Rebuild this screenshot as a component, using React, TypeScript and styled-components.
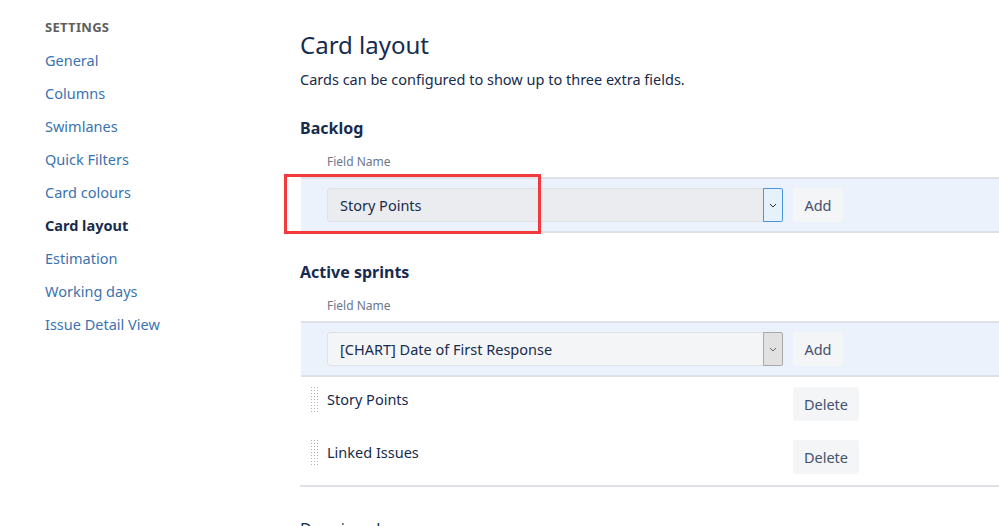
import React from "react";
import styled, { createGlobalStyle } from "styled-components";

const Global = createGlobalStyle`
  html, body { margin: 0; padding: 0; background: #fff; overflow: hidden; }
  body { font-family: "Noto Sans", "Open Sans", sans-serif; color: #172b4d; }
  * { box-sizing: border-box; }
`;

const Page = styled.div`
  display: flex;
  width: 999px;
  height: 526px;
  overflow: hidden;
`;

const Sidebar = styled.nav`
  width: 300px;
  flex: none;
  padding: 17px 0 0 45px;
  display: flex;
  flex-direction: column;
`;

const SideHeading = styled.div`
  font-size: 13px;
  font-weight: 700;
  line-height: 20px;
  color: #5e5e5e;
  letter-spacing: 0.3px;
  margin-bottom: 7px;
`;

const SideItem = styled.a<{ $active?: boolean }>`
  display: block;
  font-size: 14.5px;
  line-height: 33px;
  height: 33px;
  text-decoration: none;
  color: ${(p) => (p.$active ? "#172b4d" : "#3b73af")};
  font-weight: ${(p) => (p.$active ? 700 : 400)};
  cursor: pointer;
`;

const Main = styled.main`
  flex: 1;
  min-width: 0;
  padding-top: 30px;
`;

const Title = styled.h1`
  margin: 0 0 9px;
  font-size: 24px;
  line-height: 30px;
  font-weight: 400;
  color: #172b4d;
`;

const Intro = styled.p`
  margin: 0 0 27px;
  font-size: 14.5px;
  line-height: 20px;
`;

const SectionTitle = styled.h2<{ $light?: boolean }>`
  margin: 0 0 14px;
  font-size: 16px;
  line-height: 24px;
  font-weight: ${(p) => (p.$light ? 400 : 700)};
`;

const FieldLabel = styled.div`
  padding-left: 27px;
  font-size: 12px;
  line-height: 16px;
  color: #6b778c;
  margin-bottom: 7px;
`;

const AddRow = styled.div`
  position: relative;
  display: flex;
  align-items: center;
  gap: 10px;
  height: 56px;
  margin-left: 1px;
  padding: 0 0 0 26px;
  background: #ebf2fc;
  border-top: 2px solid #dfe1e6;
  border-bottom: 2px solid #dfe1e6;
`;

const SelectBox = styled.div<{ $focused?: boolean }>`
  display: flex;
  align-items: stretch;
  width: 456px;
  height: 34px;
  border: 1px solid #dfe1e6;
  border-radius: 3px;
  background: ${(p) => (p.$focused ? "#ebecf0" : "#f4f5f7")};
  font-size: 14.5px;
  color: #172b4d;
`;

const SelectText = styled.span`
  flex: 1;
  display: flex;
  align-items: center;
  padding-left: 12px;
`;

const Arrow = styled.span<{ $focused?: boolean }>`
  width: 20px;
  display: flex;
  align-items: center;
  justify-content: center;
  border: 1px solid ${(p) => (p.$focused ? "#4a95e0" : "#a9a9a9")};
  background: ${(p) => (p.$focused ? "#e5f1fb" : "#e1e1e1")};
  border-radius: 0 2px 2px 0;
  margin: -1px -1px -1px 0;
`;

const Button = styled.button<{ $w: number }>`
  width: ${(p) => p.$w}px;
  height: 34px;
  border: none;
  border-radius: 3px;
  background: #f4f5f7;
  color: #42526e;
  font-family: inherit;
  font-size: 14.5px;
  padding: 0;
  cursor: pointer;
`;

const Annotation = styled.div`
  position: absolute;
  left: -17px;
  top: -5px;
  width: 257px;
  height: 60px;
  border: 3px solid #f23a3c;
  pointer-events: none;
`;

const Section = styled.section`
  margin-bottom: 27px;
`;

const List = styled.div`
  display: flex;
  flex-direction: column;
  gap: 19px;
  border-bottom: 2px solid #dfe1e6;
  padding: 10px 0 11px;
  margin-bottom: 30px;
`;

const ListRow = styled.div`
  display: flex;
  align-items: flex-start;
  height: 34px;
  padding-left: 10px;
`;

const Handle = styled.span`
  width: 9px;
  height: 26px;
  margin-top: -1px;
  background-image: radial-gradient(circle, #b3b3b3 0.8px, transparent 1px);
  background-size: 3px 3px;
`;

const ItemName = styled.span`
  width: 456px;
  margin-left: 8px;
  margin-top: 2px;
  font-size: 14.5px;
  line-height: 20px;
`;

const ListButtonWrap = styled.span`
  margin-left: 10px;
`;

const Chevron = ({ color }: { color: string }) => (
  <svg width="8" height="5" viewBox="0 0 8 5">
    <path d="M1 1l3 3 3-3" fill="none" stroke={color} strokeWidth="1" />
  </svg>
);

const navItems = [
  "General",
  "Columns",
  "Swimlanes",
  "Quick Filters",
  "Card colours",
  "Card layout",
  "Estimation",
  "Working days",
  "Issue Detail View",
];

export default function App() {
  return (
    <>
      <Global />
      <Page>
        <Sidebar>
          <SideHeading>SETTINGS</SideHeading>
          {navItems.map((n) => (
            <SideItem key={n} $active={n === "Card layout"}>
              {n}
            </SideItem>
          ))}
        </Sidebar>
        <Main>
          <Title>Card layout</Title>
          <Intro>Cards can be configured to show up to three extra fields.</Intro>

          <Section>
            <SectionTitle>Backlog</SectionTitle>
            <FieldLabel>Field Name</FieldLabel>
            <AddRow>
              <Annotation />
              <SelectBox $focused>
                <SelectText>Story Points</SelectText>
                <Arrow $focused>
                  <Chevron color="#333" />
                </Arrow>
              </SelectBox>
              <Button $w={50}>Add</Button>
            </AddRow>
          </Section>

          <SectionTitle>Active sprints</SectionTitle>
          <FieldLabel>Field Name</FieldLabel>
          <AddRow>
            <SelectBox>
              <SelectText>[CHART] Date of First Response</SelectText>
              <Arrow>
                <Chevron color="#666" />
              </Arrow>
            </SelectBox>
            <Button $w={50}>Add</Button>
          </AddRow>
          <List>
            {["Story Points", "Linked Issues"].map((n) => (
              <ListRow key={n}>
                <Handle />
                <ItemName>{n}</ItemName>
                <ListButtonWrap>
                  <Button $w={66}>Delete</Button>
                </ListButtonWrap>
              </ListRow>
            ))}
          </List>
          <SectionTitle $light>Days in column</SectionTitle>
        </Main>
      </Page>
    </>
  );
}
